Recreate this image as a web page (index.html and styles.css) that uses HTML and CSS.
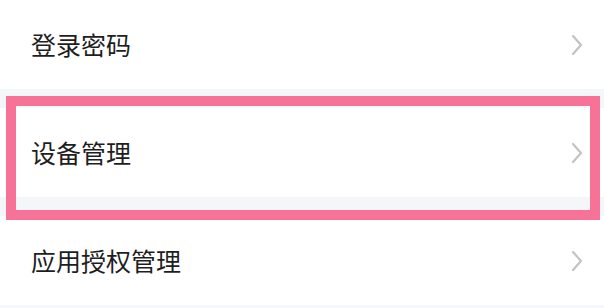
FILE: index.html
```html
<!DOCTYPE html>
<html lang="zh-CN">
<head>
<meta charset="utf-8">
<title>账号安全</title>
<link rel="stylesheet" href="styles.css">
</head>
<body>
<div class="list">
  <div class="row">
    <span class="label">登录密码</span>
    <svg class="chev" width="12" height="22" viewBox="0 0 12 22"><polyline points="2,2 10,11 2,20" fill="none" stroke="#c3c3c6" stroke-width="2.2" stroke-linecap="round" stroke-linejoin="round"/></svg>
  </div>
  <div class="row">
    <span class="label">设备管理</span>
    <svg class="chev" width="12" height="22" viewBox="0 0 12 22"><polyline points="2,2 10,11 2,20" fill="none" stroke="#c3c3c6" stroke-width="2.2" stroke-linecap="round" stroke-linejoin="round"/></svg>
  </div>
  <div class="row">
    <span class="label">应用授权管理</span>
    <svg class="chev" width="12" height="22" viewBox="0 0 12 22"><polyline points="2,2 10,11 2,20" fill="none" stroke="#c3c3c6" stroke-width="2.2" stroke-linecap="round" stroke-linejoin="round"/></svg>
  </div>
  <div class="highlight"></div>
</div>
</body>
</html>
```
FILE: styles.css
```css
html, body {
  margin: 0;
  padding: 0;
  background: #f5f6f9;
}
.list {
  position: relative;
  width: 604px;
  height: 308px;
  display: flex;
  flex-direction: column;
  gap: 19px;
  overflow: hidden;
}
.row {
  height: 89px;
  flex: none;
  background: #ffffff;
  display: flex;
  align-items: center;
  justify-content: space-between;
  padding: 0 21px 0 31px;
  box-sizing: border-box;
}
.label {
  font-family: "Noto Sans CJK SC", "Noto Sans", sans-serif;
  font-size: 25px;
  color: #1e1e1e;
  line-height: 1;
}
.chev {
  display: block;
}
.highlight {
  position: absolute;
  left: 6px;
  top: 96px;
  width: 594px;
  height: 124px;
  box-sizing: border-box;
  border: 10px solid #f67297;
}
```
